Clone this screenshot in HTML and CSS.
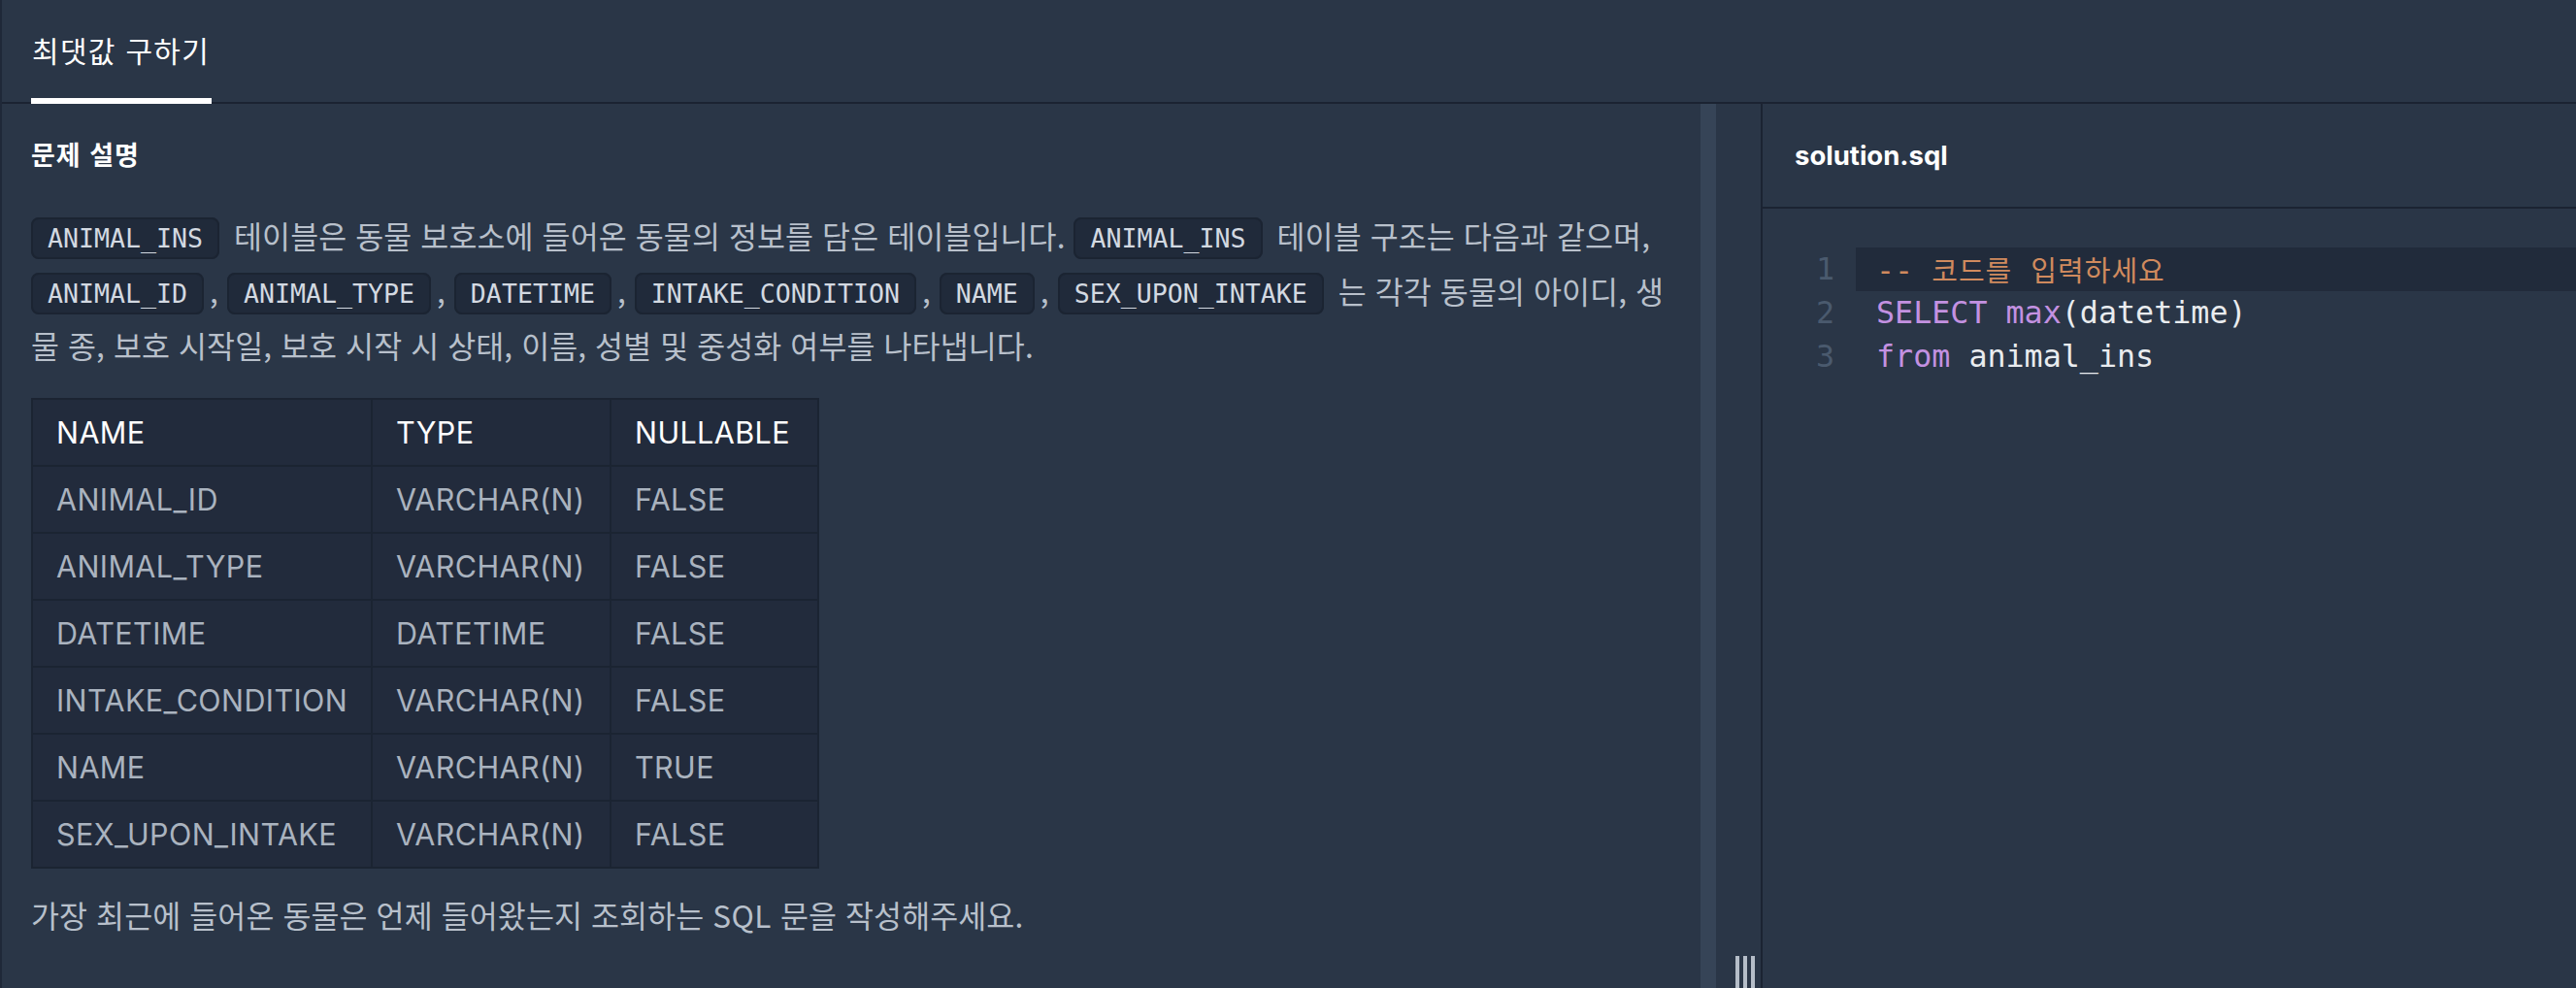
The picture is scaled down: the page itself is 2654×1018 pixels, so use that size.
FILE: index.html
```html
<!DOCTYPE html>
<html lang="ko">
<head>
<meta charset="utf-8">
<title>최댓값 구하기</title>
<link rel="stylesheet" href="styles.css">
</head>
<body>
<div class="app">
  <header class="topbar">
    <div class="tab is-active">최댓값 구하기</div>
  </header>
  <div class="workspace">
    <section class="guide">
      <h6 class="guide-title">문제 설명</h6>
      <p class="guide-text"><code>ANIMAL_INS</code> 테이블은 동물 보호소에 들어온 동물의 정보를 담은 테이블입니다. <code>ANIMAL_INS</code> 테이블 구조는 다음과 같으며, <code>ANIMAL_ID</code>, <code>ANIMAL_TYPE</code>, <code>DATETIME</code>, <code>INTAKE_CONDITION</code>, <code>NAME</code>, <code>SEX_UPON_INTAKE</code> 는 각각 동물의 아이디, 생물 종, 보호 시작일, 보호 시작 시 상태, 이름, 성별 및 중성화 여부를 나타냅니다.</p>
      <table class="schema">
        <thead>
          <tr><th>NAME</th><th>TYPE</th><th>NULLABLE</th></tr>
        </thead>
        <tbody>
          <tr><td>ANIMAL_ID</td><td>VARCHAR(N)</td><td>FALSE</td></tr>
          <tr><td>ANIMAL_TYPE</td><td>VARCHAR(N)</td><td>FALSE</td></tr>
          <tr><td>DATETIME</td><td>DATETIME</td><td>FALSE</td></tr>
          <tr><td>INTAKE_CONDITION</td><td>VARCHAR(N)</td><td>FALSE</td></tr>
          <tr><td>NAME</td><td>VARCHAR(N)</td><td>TRUE</td></tr>
          <tr><td>SEX_UPON_INTAKE</td><td>VARCHAR(N)</td><td>FALSE</td></tr>
        </tbody>
      </table>
      <p class="guide-text ask">가장 최근에 들어온 동물은 언제 들어왔는지 조회하는 <span class="en">SQL</span> 문을 작성해주세요.</p>
    </section>
    <div class="scroll-track"></div>
    <div class="resizer">
      <div class="grip"><span></span><span></span><span></span></div>
    </div>
    <section class="editor">
      <div class="editor-head">solution.sql</div>
      <div class="code">
        <div class="code-line is-active"><span class="ln">1</span><span class="src"><span class="cm">-- <span class="ko">코드를</span> <span class="ko">입력하세요</span></span></span></div>
        <div class="code-line"><span class="ln">2</span><span class="src"><span class="kw">SELECT</span> <span class="kw">max</span>(datetime)</span></div>
        <div class="code-line"><span class="ln">3</span><span class="src"><span class="kw">from</span> animal_ins</span></div>
      </div>
    </section>
  </div>
</div>
</body>
</html>
```

FILE: styles.css
```css
html, body {
  margin: 0;
  padding: 0;
  background: #2a3647;
}

.app {
  height: 100vh;
  display: flex;
  flex-direction: column;
  border-left: 2px solid #1f2838;
  box-sizing: border-box;
  overflow: hidden;
  background: #2a3647;
}

.topbar {
  flex: none;
  height: 105px;
  border-bottom: 2px solid #1b2332;
  display: flex;
  align-items: flex-end;
  padding-left: 30px;
}

.tab {
  height: 101px;
  border-bottom: 6px solid #ffffff;
  margin-bottom: -2px;
  display: flex;
  align-items: center;
  padding: 0 2px 0 1px;
  font-family: "Noto Sans CJK KR", sans-serif;
  font-size: 30px;
  letter-spacing: 1.3px;
  color: #ffffff;
}

.workspace {
  flex: 1;
  min-height: 0;
  display: flex;
}

.guide {
  flex: none;
  width: 1750px;
  box-sizing: border-box;
  padding: 32px 32px 0 30px;
  overflow: hidden;
}

.guide-title {
  margin: 0;
  font-family: "Noto Sans CJK KR", sans-serif;
  font-weight: 700;
  font-size: 27px;
  line-height: 40px;
  letter-spacing: 1px;
  color: #ffffff;
}

.guide-text {
  margin: 35px 0 0;
  font-family: "Noto Sans CJK KR", sans-serif;
  font-size: 31.5px;
  line-height: 56.5px;
  letter-spacing: 0.1px;
  color: #b8c0cb;
}

.guide-text code {
  font-family: "DejaVu Sans Mono", monospace;
  font-size: 26.6px;
  line-height: 1;
  letter-spacing: 0;
  color: #d3d9e1;
  background: #202a3a;
  border: 2px solid #1b2432;
  border-radius: 8px;
  padding: 4px 15px;
  margin: 0 6px 0 0;
  vertical-align: 1px;
}

.guide-text .en {
  letter-spacing: 0.5px;
}

.schema {
  margin-top: 26px;
  border-collapse: collapse;
  table-layout: fixed;
  width: 810px;
  font-family: Inter, "Liberation Sans", sans-serif;
  font-size: 30.5px;
  letter-spacing: 0.4px;
  color: #aab3bf;
}

.schema th,
.schema td {
  box-sizing: border-box;
  border: 2px solid #1b2432;
  background: #222b3c;
  padding: 0 24px;
  line-height: 67px;
  text-align: left;
  font-weight: 400;
  white-space: nowrap;
}

.schema th {
  color: #ffffff;
}

.schema th:nth-child(1) { width: 350px; }
.schema th:nth-child(2) { width: 246px; }
.schema th:nth-child(3) { width: 214px; }

.guide-text.ask {
  margin-top: 19px;
}

.scroll-track {
  flex: none;
  width: 16px;
  background: #364457;
}

.resizer {
  flex: none;
  width: 46px;
  box-sizing: border-box;
  padding-left: 20px;
  display: flex;
  flex-direction: column;
  justify-content: flex-end;
}

.grip {
  display: flex;
  gap: 4px;
  height: 33px;
}

.grip span {
  width: 4px;
  background: #b5bdc8;
}

.editor {
  flex: 1;
  min-width: 0;
  border-left: 2px solid #1b2332;
  display: flex;
  flex-direction: column;
}

.editor-head {
  flex: none;
  height: 106px;
  border-bottom: 2px solid #1b2332;
  display: flex;
  align-items: center;
  padding-left: 33px;
  font-family: Inter, "Liberation Sans", sans-serif;
  font-weight: 700;
  font-size: 27.5px;
  color: #ffffff;
}

.code {
  padding-top: 40px;
  font-family: "DejaVu Sans Mono", monospace;
  font-size: 31.7px;
  line-height: 45px;
}

.code-line {
  display: flex;
  height: 45px;
}

.ln {
  flex: none;
  width: 96px;
  box-sizing: border-box;
  padding-right: 22px;
  text-align: right;
  color: #4a5a6e;
}

.src {
  flex: 1;
  padding-left: 21px;
  color: #e9ecef;
  white-space: pre;
}

.code-line.is-active .src {
  background: #212b3b;
}

.cm {
  color: #d08a5e;
}

.kw {
  color: #c391e1;
}

.ko {
  font-family: "Noto Sans CJK KR", sans-serif;
  font-size: 29px;
  letter-spacing: 1px;
}
```
